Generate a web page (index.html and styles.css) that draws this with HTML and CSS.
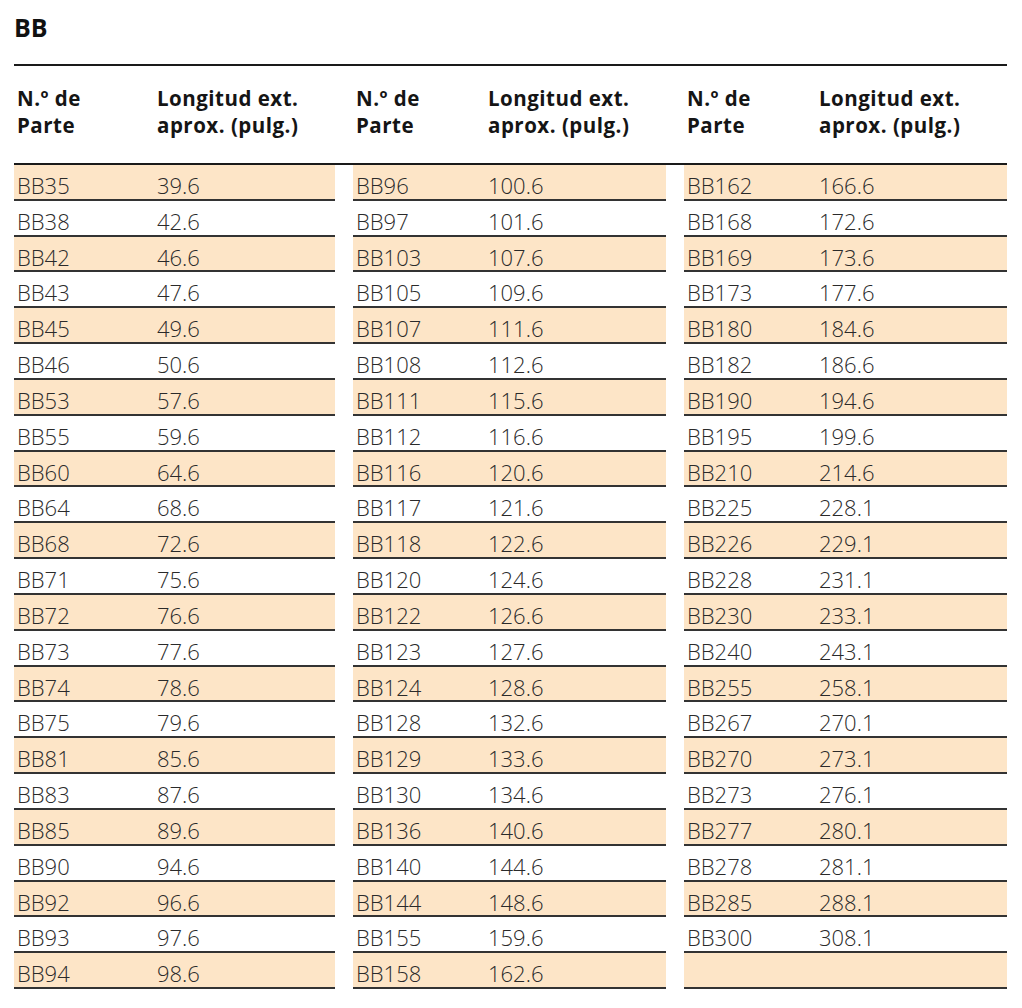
FILE: index.html
```html
<!DOCTYPE html>
<html lang="es">
<head>
<meta charset="utf-8">
<title>BB</title>
<link rel="stylesheet" href="styles.css">
</head>
<body>
<div class="page">
  <h1 class="title">BB</h1>
  <div class="table">
    <div class="head">
      <div class="group g1"><div class="hc">N.º de<br>Parte</div><div class="hc">Longitud ext.<br>aprox. (pulg.)</div></div>
      <div class="group g2"><div class="hc">N.º de<br>Parte</div><div class="hc">Longitud ext.<br>aprox. (pulg.)</div></div>
      <div class="group g3"><div class="hc">N.º de<br>Parte</div><div class="hc">Longitud ext.<br>aprox. (pulg.)</div></div>
    </div>
    <div class="body">
      <div class="col g1">
        <div class="row"><span>BB35</span><span>39.6</span></div>
        <div class="row"><span>BB38</span><span>42.6</span></div>
        <div class="row"><span>BB42</span><span>46.6</span></div>
        <div class="row"><span>BB43</span><span>47.6</span></div>
        <div class="row"><span>BB45</span><span>49.6</span></div>
        <div class="row"><span>BB46</span><span>50.6</span></div>
        <div class="row"><span>BB53</span><span>57.6</span></div>
        <div class="row"><span>BB55</span><span>59.6</span></div>
        <div class="row"><span>BB60</span><span>64.6</span></div>
        <div class="row"><span>BB64</span><span>68.6</span></div>
        <div class="row"><span>BB68</span><span>72.6</span></div>
        <div class="row"><span>BB71</span><span>75.6</span></div>
        <div class="row"><span>BB72</span><span>76.6</span></div>
        <div class="row"><span>BB73</span><span>77.6</span></div>
        <div class="row"><span>BB74</span><span>78.6</span></div>
        <div class="row"><span>BB75</span><span>79.6</span></div>
        <div class="row"><span>BB81</span><span>85.6</span></div>
        <div class="row"><span>BB83</span><span>87.6</span></div>
        <div class="row"><span>BB85</span><span>89.6</span></div>
        <div class="row"><span>BB90</span><span>94.6</span></div>
        <div class="row"><span>BB92</span><span>96.6</span></div>
        <div class="row"><span>BB93</span><span>97.6</span></div>
        <div class="row"><span>BB94</span><span>98.6</span></div>
      </div>
      <div class="col g2">
        <div class="row"><span>BB96</span><span>100.6</span></div>
        <div class="row"><span>BB97</span><span>101.6</span></div>
        <div class="row"><span>BB103</span><span>107.6</span></div>
        <div class="row"><span>BB105</span><span>109.6</span></div>
        <div class="row"><span>BB107</span><span>111.6</span></div>
        <div class="row"><span>BB108</span><span>112.6</span></div>
        <div class="row"><span>BB111</span><span>115.6</span></div>
        <div class="row"><span>BB112</span><span>116.6</span></div>
        <div class="row"><span>BB116</span><span>120.6</span></div>
        <div class="row"><span>BB117</span><span>121.6</span></div>
        <div class="row"><span>BB118</span><span>122.6</span></div>
        <div class="row"><span>BB120</span><span>124.6</span></div>
        <div class="row"><span>BB122</span><span>126.6</span></div>
        <div class="row"><span>BB123</span><span>127.6</span></div>
        <div class="row"><span>BB124</span><span>128.6</span></div>
        <div class="row"><span>BB128</span><span>132.6</span></div>
        <div class="row"><span>BB129</span><span>133.6</span></div>
        <div class="row"><span>BB130</span><span>134.6</span></div>
        <div class="row"><span>BB136</span><span>140.6</span></div>
        <div class="row"><span>BB140</span><span>144.6</span></div>
        <div class="row"><span>BB144</span><span>148.6</span></div>
        <div class="row"><span>BB155</span><span>159.6</span></div>
        <div class="row"><span>BB158</span><span>162.6</span></div>
      </div>
      <div class="col g3">
        <div class="row"><span>BB162</span><span>166.6</span></div>
        <div class="row"><span>BB168</span><span>172.6</span></div>
        <div class="row"><span>BB169</span><span>173.6</span></div>
        <div class="row"><span>BB173</span><span>177.6</span></div>
        <div class="row"><span>BB180</span><span>184.6</span></div>
        <div class="row"><span>BB182</span><span>186.6</span></div>
        <div class="row"><span>BB190</span><span>194.6</span></div>
        <div class="row"><span>BB195</span><span>199.6</span></div>
        <div class="row"><span>BB210</span><span>214.6</span></div>
        <div class="row"><span>BB225</span><span>228.1</span></div>
        <div class="row"><span>BB226</span><span>229.1</span></div>
        <div class="row"><span>BB228</span><span>231.1</span></div>
        <div class="row"><span>BB230</span><span>233.1</span></div>
        <div class="row"><span>BB240</span><span>243.1</span></div>
        <div class="row"><span>BB255</span><span>258.1</span></div>
        <div class="row"><span>BB267</span><span>270.1</span></div>
        <div class="row"><span>BB270</span><span>273.1</span></div>
        <div class="row"><span>BB273</span><span>276.1</span></div>
        <div class="row"><span>BB277</span><span>280.1</span></div>
        <div class="row"><span>BB278</span><span>281.1</span></div>
        <div class="row"><span>BB285</span><span>288.1</span></div>
        <div class="row"><span>BB300</span><span>308.1</span></div>
        <div class="row"><span></span><span></span></div>
      </div>
    </div>
  </div>
</div>
</body>
</html>
```

FILE: styles.css
```css
html, body {
  margin: 0;
  padding: 0;
  background: #ffffff;
}

.page {
  padding: 12px 15px 0 14px;
  font-family: "Open Sans", "Noto Sans", sans-serif;
  color: #111;
}

.title {
  margin: 0;
  font-size: 25px;
  font-weight: 700;
  line-height: 30px;
  height: 52px;
  letter-spacing: 0;
}

.table {
  width: 993px;
}

.head {
  display: grid;
  grid-template-columns: 321px 313px 323px;
  column-gap: 18px;
  border-top: 2px solid #1a1a1a;
  border-bottom: 2px solid #1a1a1a;
  padding: 19px 0 24px;
}

.group {
  display: grid;
}

.g1 { grid-template-columns: 140px 1fr; }
.g2 { grid-template-columns: 132px 1fr; }
.g3 { grid-template-columns: 132px 1fr; }

.hc {
  padding-left: 3px;
  font-size: 20.5px;
  font-weight: 700;
  line-height: 27px;
  letter-spacing: 0.5px;
  color: #151515;
}

.body {
  display: grid;
  grid-template-columns: 321px 313px 323px;
  column-gap: 18px;
}

.col {
  display: flex;
  flex-direction: column;
}

.row {
  display: grid;
  box-sizing: border-box;
  height: 35.83px;
  padding-top: 7px;
  border-bottom: 2px solid #333;
  font-size: 22px;
  font-weight: 300;
  line-height: 26.83px;
  color: #2a2a2a;
}

.col.g1 .row { grid-template-columns: 140px 1fr; }
.col.g2 .row { grid-template-columns: 132px 1fr; }
.col.g3 .row { grid-template-columns: 132px 1fr; }

.row span {
  padding-left: 3px;
  white-space: nowrap;
}

.row:nth-child(odd) {
  background: #fde5c7;
}
```
